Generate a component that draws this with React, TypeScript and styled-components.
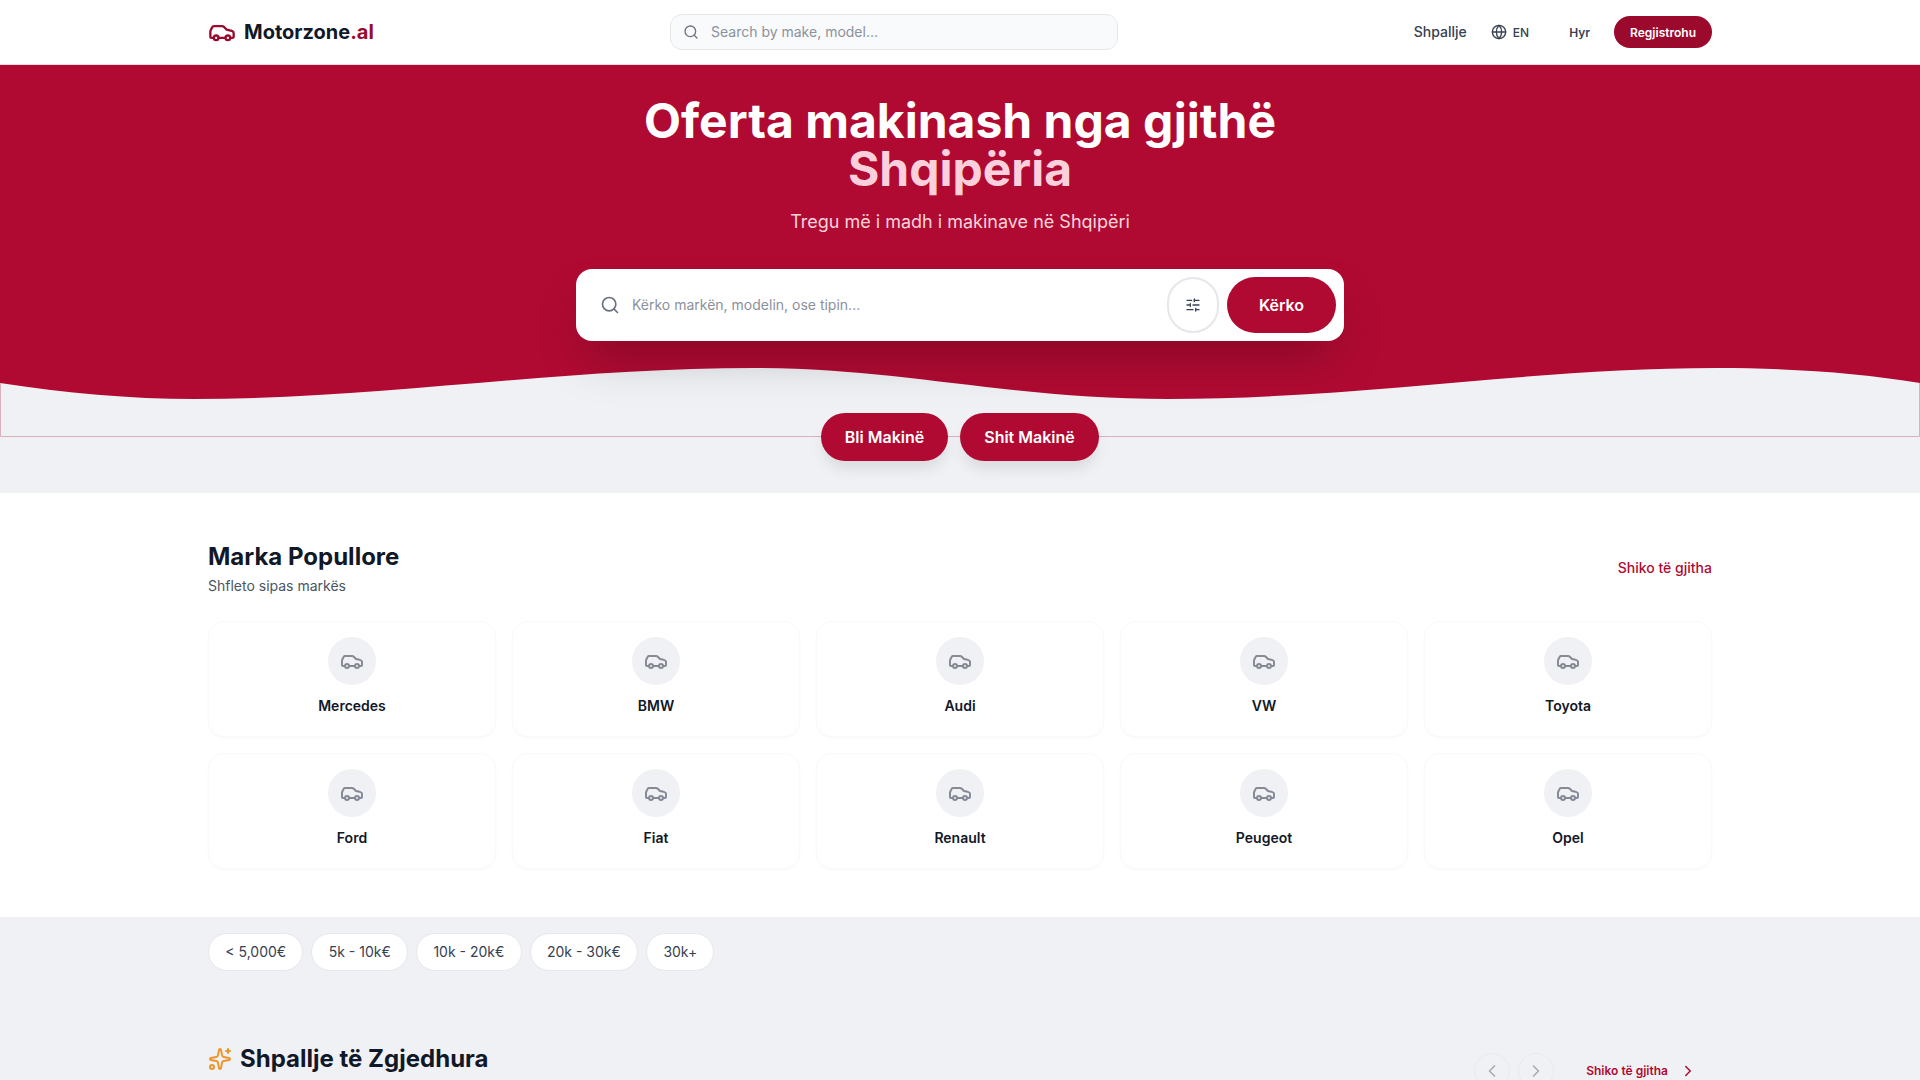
import styled, { createGlobalStyle } from "styled-components";
import {
  Car,
  ChevronLeft,
  ChevronRight,
  Globe,
  Search,
  SlidersHorizontal,
  Sparkles,
} from "lucide-react";

const crimson = "#b00a32";
const darkCrimson = "#9b0a2c";

const GlobalStyle = createGlobalStyle`
  * {
    box-sizing: border-box;
  }
  html, body {
    margin: 0;
    height: 100%;
    overflow: hidden;
    background: #f0f1f5;
    font-family: "Inter", "Liberation Sans", sans-serif;
  }
`;

const Nav = styled.header`
  height: 65px;
  background: #fff;
  border-bottom: 1px solid #fbd5dd;
`;

const NavInner = styled.div`
  width: 1504px;
  height: 64px;
  margin: 0 auto;
  display: flex;
  align-items: center;
`;

const Logo = styled.a`
  display: flex;
  align-items: center;
  gap: 8px;
  width: 462px;
  font-size: 20px;
  font-weight: 700;
  color: #111827;
  svg {
    color: ${darkCrimson};
  }
  span {
    color: ${darkCrimson};
  }
`;

const NavSearch = styled.div`
  width: 448px;
  height: 36px;
  display: flex;
  align-items: center;
  gap: 12px;
  padding: 0 12px;
  background: #f9fafb;
  border: 1px solid #e5e7eb;
  border-radius: 12px;
  color: #6b7280;
`;

const PlainInput = styled.input`
  flex: 1;
  min-width: 0;
  border: 0;
  outline: 0;
  padding: 0 0 2px;
  background: transparent;
  font: 400 14px "Inter", sans-serif;
  &::placeholder {
    color: #8b919c;
    opacity: 1;
  }
`;

const NavRight = styled.nav`
  margin-left: auto;
  display: flex;
  align-items: center;
  color: #374151;
`;

const NavLink = styled.a`
  font-size: 14px;
  font-weight: 500;
  margin-right: 24px;
  margin-top: -2px;
`;

const Lang = styled.div`
  display: flex;
  align-items: center;
  gap: 6px;
  font-size: 12px;
  font-weight: 500;
  margin-right: 40px;
`;

const Login = styled.a`
  font-size: 12px;
  font-weight: 600;
  margin-right: 24px;
`;

const Register = styled.a`
  width: 98px;
  height: 32px;
  display: flex;
  align-items: center;
  justify-content: center;
  border-radius: 999px;
  background: ${darkCrimson};
  color: #fff;
  font-size: 12px;
  font-weight: 600;
`;

const HeroWrap = styled.section`
  padding-bottom: 32px;
  background: #f0f1f5;
`;

const Hero = styled.div`
  position: relative;
  height: 372px;
  padding-top: 32px;
  background: ${crimson};
  text-align: center;
`;

const Wave = styled.svg`
  position: absolute;
  left: 0;
  bottom: 0;
  width: 100%;
  height: 72px;
  display: block;
`;

const HeroTitle = styled.h1`
  margin: 0;
  font-size: 48px;
  line-height: 48px;
  font-weight: 700;
  color: #fff;
  span {
    display: block;
    color: #fbd0dc;
  }
`;

const HeroSub = styled.p`
  margin: 15px 0 33px;
  font-size: 18px;
  line-height: 28px;
  color: #f9d4dd;
`;

const SearchBox = styled.div`
  position: relative;
  z-index: 1;
  width: 768px;
  height: 72px;
  margin: 0 auto;
  display: flex;
  align-items: center;
  padding: 8px 8px 8px 24px;
  background: #fff;
  border-radius: 16px;
  box-shadow: 0 25px 50px -12px rgba(0, 0, 0, 0.25);
  color: #6b7280;
`;

const BigInput = styled(PlainInput)`
  margin-left: 12px;
`;

const FilterButton = styled.button`
  width: 52px;
  height: 56px;
  display: flex;
  align-items: center;
  justify-content: center;
  padding: 0;
  margin-right: 8px;
  background: #fff;
  border: 2px solid #e5e7eb;
  border-radius: 999px;
  color: #374151;
`;

const PrimaryButton = styled.button<{ $w: number; $h: number }>`
  width: ${({ $w }) => $w}px;
  height: ${({ $h }) => $h}px;
  padding: 0;
  border: 0;
  border-radius: 24px;
  background: ${crimson};
  color: #fff;
  font: 600 16px "Inter", sans-serif;
`;

const RoundButton = styled(PrimaryButton)`
  border-radius: 999px;
`;

const ActionRow = styled.div`
  position: relative;
  z-index: 2;
  display: flex;
  justify-content: center;
  gap: 12px;
  margin-top: -24px;
  button {
    box-shadow: 0 10px 15px -3px rgba(0, 0, 0, 0.1);
  }
`;

const WhiteSection = styled.section`
  background: #fff;
  padding: 48px 0;
`;

const Container = styled.div`
  width: 1504px;
  margin: 0 auto;
`;

const SectionHead = styled.div`
  display: flex;
  justify-content: space-between;
  align-items: center;
  height: 56px;
  margin-bottom: 24px;
`;

const HeadLeft = styled.div`
  align-self: flex-start;
`;

const SectionTitle = styled.h2`
  display: flex;
  align-items: center;
  gap: 8px;
  margin: 0 0 3px;
  font-size: 24px;
  line-height: 32px;
  font-weight: 700;
  color: #111827;
  svg {
    color: #ea962c;
  }
`;

const SectionSub = styled.p`
  margin: 0;
  font-size: 14px;
  line-height: 20px;
  color: #4b5563;
`;

const SeeAll = styled.a`
  margin-bottom: 4px;
  font-size: 14px;
  font-weight: 500;
  color: ${crimson};
`;

const BrandGrid = styled.div`
  display: grid;
  grid-template-columns: repeat(5, 1fr);
  grid-auto-rows: 116px;
  gap: 16px;
`;

const BrandCard = styled.div`
  display: flex;
  flex-direction: column;
  align-items: center;
  gap: 11px;
  padding-top: 15px;
  background: #fff;
  border: 1px solid #fafafb;
  border-radius: 16px;
  box-shadow: 0 1px 2px rgba(0, 0, 0, 0.03);
  font-size: 14px;
  line-height: 20px;
  font-weight: 600;
  color: #111827;
`;

const BrandIcon = styled.div`
  width: 48px;
  height: 48px;
  display: flex;
  align-items: center;
  justify-content: center;
  border-radius: 50%;
  background: #f0f1f5;
  color: #858a95;
`;

const GraySection = styled.section`
  padding-top: 16px;
`;

const Chips = styled.div`
  display: flex;
  gap: 8px;
  margin-bottom: 72px;
`;

const Chip = styled.button`
  height: 38px;
  padding: 0 16.3px 2px;
  background: #fff;
  border: 1px solid #e5e7eb;
  border-radius: 999px;
  color: #374151;
  font: 400 14px "Inter", sans-serif;
`;

const HeadRight = styled.div`
  display: flex;
  align-items: center;
`;

const Arrow = styled.button`
  width: 36px;
  height: 36px;
  display: flex;
  align-items: center;
  justify-content: center;
  padding: 0;
  margin-right: 8px;
  background: transparent;
  border: 1px solid #e9eaee;
  border-radius: 50%;
  color: #a8acb4;
`;

const SmallLink = styled.a`
  display: flex;
  align-items: center;
  gap: 11px;
  margin-left: 24px;
  margin-bottom: 1px;
  padding-right: 15px;
  font-size: 12px;
  font-weight: 600;
  color: ${crimson};
`;

const brands = ["Mercedes", "BMW", "Audi", "VW", "Toyota", "Ford", "Fiat", "Renault", "Peugeot", "Opel"];
const prices = ["< 5,000€", "5k - 10k€", "10k - 20k€", "20k - 30k€", "30k+"];

export default function App() {
  return (
    <>
      <GlobalStyle />
      <Nav>
        <NavInner>
          <Logo>
            <Car size={28} />
            <div>
              Motorzone<span>.al</span>
            </div>
          </Logo>
          <NavSearch>
            <Search size={16} />
            <PlainInput placeholder="Search by make, model..." />
          </NavSearch>
          <NavRight>
            <NavLink>Shpallje</NavLink>
            <Lang>
              <Globe size={16} />
              EN
            </Lang>
            <Login>Hyr</Login>
            <Register>Regjistrohu</Register>
          </NavRight>
        </NavInner>
      </Nav>

      <HeroWrap>
        <Hero>
          <Wave viewBox="0 0 1920 72" preserveAspectRatio="none">
            <path
              fill="#f0f1f5"
              d="M0,18 C65,28 130,34 194,34 C380,34 560,3 755,3 C900,3 1010,34 1168,34 C1360,34 1530,3 1717,3 C1790,3 1860,8 1920,18 L1920,72 L0,72 Z"
            />
            <path fill="none" stroke="#d9b0bb" d="M0.5,18 L0.5,71.5 L1919.5,71.5 L1919.5,18" />
          </Wave>
          <HeroTitle>
            Oferta makinash nga gjithë
            <span>Shqipëria</span>
          </HeroTitle>
          <HeroSub>Tregu më i madh i makinave në Shqipëri</HeroSub>
          <SearchBox>
            <Search size={20} />
            <BigInput placeholder="Kërko markën, modelin, ose tipin..." />
            <FilterButton>
              <SlidersHorizontal size={16} />
            </FilterButton>
            <RoundButton $w={109} $h={56}>
              Kërko
            </RoundButton>
          </SearchBox>
        </Hero>
        <ActionRow>
          <PrimaryButton $w={127} $h={48}>
            Bli Makinë
          </PrimaryButton>
          <PrimaryButton $w={139} $h={48}>
            Shit Makinë
          </PrimaryButton>
        </ActionRow>
      </HeroWrap>

      <WhiteSection>
        <Container>
          <SectionHead>
            <HeadLeft>
              <SectionTitle>Marka Popullore</SectionTitle>
              <SectionSub>Shfleto sipas markës</SectionSub>
            </HeadLeft>
            <SeeAll>Shiko të gjitha</SeeAll>
          </SectionHead>
          <BrandGrid>
            {brands.map((brand) => (
              <BrandCard key={brand}>
                <BrandIcon>
                  <Car size={24} />
                </BrandIcon>
                {brand}
              </BrandCard>
            ))}
          </BrandGrid>
        </Container>
      </WhiteSection>

      <GraySection>
        <Container>
          <Chips>
            {prices.map((price) => (
              <Chip key={price}>{price}</Chip>
            ))}
          </Chips>
          <SectionHead>
            <HeadLeft>
              <SectionTitle>
                <Sparkles size={24} />
                Shpallje të Zgjedhura
              </SectionTitle>
            </HeadLeft>
            <HeadRight>
              <Arrow>
                <ChevronLeft size={20} />
              </Arrow>
              <Arrow>
                <ChevronRight size={20} />
              </Arrow>
              <SmallLink>
                Shiko të gjitha
                <ChevronRight size={18} />
              </SmallLink>
            </HeadRight>
          </SectionHead>
        </Container>
      </GraySection>
    </>
  );
}
